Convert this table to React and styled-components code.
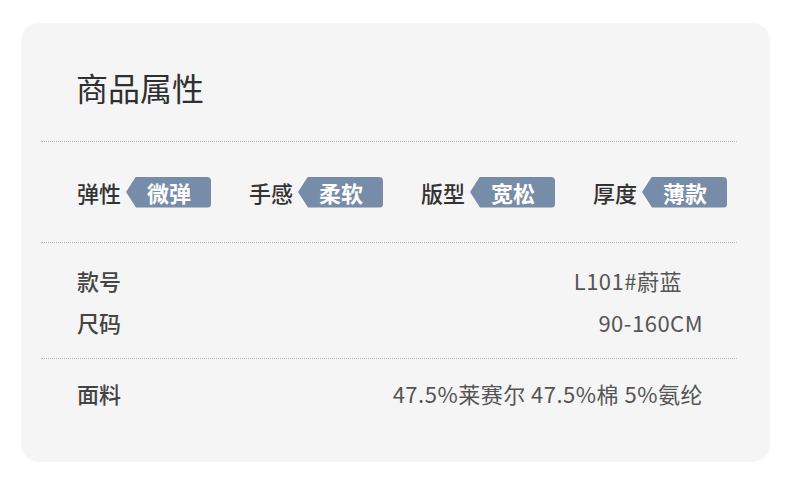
import React from "react";
import styled, { createGlobalStyle } from "styled-components";

const GlobalStyle = createGlobalStyle`
  html, body {
    margin: 0;
    padding: 0;
    background: #ffffff;
  }
  body {
    font-family: "Noto Sans CJK SC", "Noto Sans", sans-serif;
  }
`;

const Page = styled.div`
  width: 790px;
  height: 481px;
  box-sizing: border-box;
  padding: 23px 20px 19px 21px;
`;

const Card = styled.div`
  width: 749px;
  height: 439px;
  box-sizing: border-box;
  background: #f5f5f5;
  border-radius: 18px;
  padding: 0 33px 0 20px;
  display: flex;
  flex-direction: column;
`;

const Header = styled.div`
  height: 118px;
  box-sizing: border-box;
  padding: 45px 0 0 35px;
`;

const Title = styled.h1`
  margin: 0;
  font-size: 32px;
  line-height: 38px;
  font-weight: 400;
  color: #2f2f2f;
`;

const Divider = styled.div`
  height: 0;
  border-top: 1px dotted #b8b8b8;
`;

const TagRow = styled.div`
  height: 100px;
  padding-left: 36px;
  display: grid;
  grid-template-columns: repeat(4, 172px);
  align-items: center;
`;

const TagGroup = styled.div`
  display: flex;
  align-items: center;
  gap: 5px;
`;

const TagLabel = styled.span`
  font-size: 22px;
  line-height: 30px;
  font-weight: 500;
  color: #333;
`;

const Tag = styled.span`
  display: inline-block;
  height: 31px;
  line-height: 31px;
  padding: 0 20px 0 21px;
  background: #778ca9;
  color: #fff;
  font-size: 22px;
  font-weight: 700;
  border-radius: 0 4px 4px 0;
  clip-path: polygon(10px 0, 100% 0, 100% 100%, 10px 100%, 0 50%);
`;

const InfoBlock = styled.div`
  padding: ${(p) => p.$pad};
  padding-left: 36px;
  padding-right: 34px;
`;

const InfoRow = styled.div`
  height: 42px;
  display: flex;
  align-items: center;
  justify-content: space-between;
`;

const InfoLabel = styled.span`
  font-size: 22px;
  font-weight: 500;
  color: #444;
`;

const InfoValue = styled.span`
  font-size: 22px;
  letter-spacing: 0.5px;
  color: #555;
  margin-right: ${(p) => p.$shift || 0}px;
`;

const tags = [
  ["弹性", "微弹"],
  ["手感", "柔软"],
  ["版型", "宽松"],
  ["厚度", "薄款"],
];

export default function App() {
  return (
    <>
      <GlobalStyle />
      <Page>
        <Card>
          <Header>
            <Title>商品属性</Title>
          </Header>
          <Divider />
          <TagRow>
            {tags.map(([label, value]) => (
              <TagGroup key={label}>
                <TagLabel>{label}</TagLabel>
                <Tag>{value}</Tag>
              </TagGroup>
            ))}
          </TagRow>
          <Divider />
          <InfoBlock $pad="16px 0 15px">
            <InfoRow>
              <InfoLabel>款号</InfoLabel>
              <InfoValue $shift={21}>L101#蔚蓝</InfoValue>
            </InfoRow>
            <InfoRow>
              <InfoLabel>尺码</InfoLabel>
              <InfoValue>90-160CM</InfoValue>
            </InfoRow>
          </InfoBlock>
          <Divider />
          <InfoBlock $pad="13px 0 0">
            <InfoRow>
              <InfoLabel>面料</InfoLabel>
              <InfoValue>47.5%莱赛尔 47.5%棉 5%氨纶</InfoValue>
            </InfoRow>
          </InfoBlock>
        </Card>
      </Page>
    </>
  );
}
